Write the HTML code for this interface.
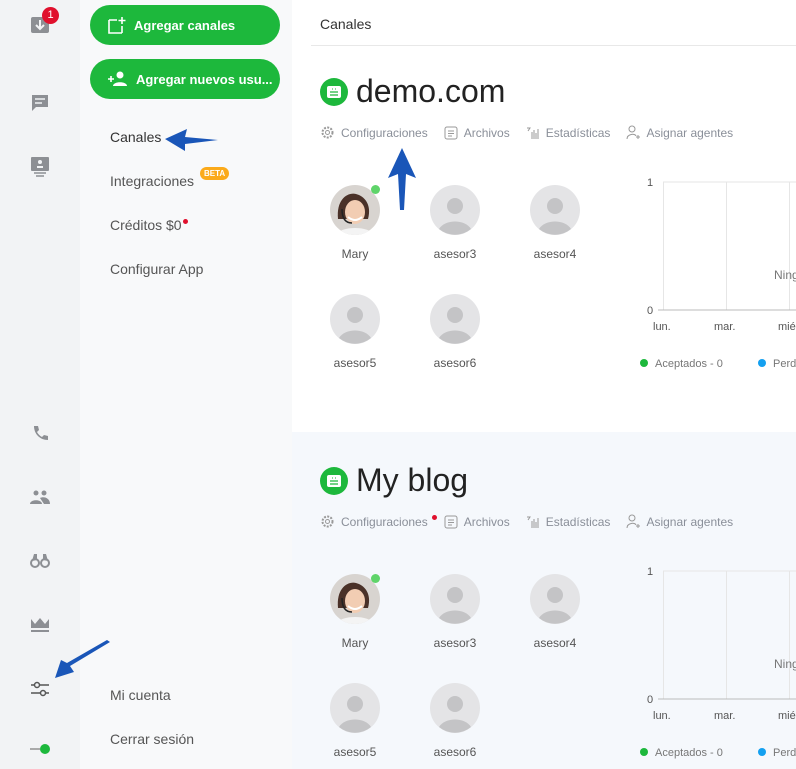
<!DOCTYPE html>
<html><head><meta charset="utf-8"><style>
*{margin:0;padding:0;box-sizing:border-box}
body{width:796px;height:769px;overflow:hidden;position:relative;font-family:"Liberation Sans",Arial,sans-serif;background:#fff;color:#333}
.a{position:absolute}
.rail{left:0;top:0;width:80px;height:769px;background:#f2f3f5}
.side{left:80px;top:0;width:212px;height:769px;background:#f8f9fa}
.btn{left:90px;width:190px;height:40px;border-radius:20px;background:#1db83c;color:#fff;font-size:13px;font-weight:bold;display:flex;align-items:center;padding-left:18px;gap:8px}
.nav{left:110px;font-size:14px;color:#555}
.sec2{left:292px;top:432px;width:504px;height:337px;background:#f5f8fc}
.title{font-size:32px;color:#222;display:flex;align-items:center;gap:8px}
.chip{width:28px;height:28px;border-radius:50%;background:#1db83c;display:flex;align-items:center;justify-content:center}
.tabs{font-size:12px;color:#8a8f99;display:flex;align-items:center}
.tabs span{display:flex;align-items:center;gap:6px;margin-right:16px}
.lbl{font-size:12px;color:#555;width:80px;text-align:center}
</style></head><body>
<div class="a rail"></div>
<div class="a side"></div>
<svg class="a" style="left:30px;top:15px" width="20" height="20"><rect x="1" y="2" width="18" height="16" rx="2" fill="#8d8f94"/><path d="M10 5v8M6 10l4 4 4-4" stroke="#f2f3f5" stroke-width="2" fill="none"/></svg>
<div class="a" style="left:42px;top:7px;width:17px;height:17px;border-radius:50%;background:#e0102d;color:#fff;font-size:11px;text-align:center;line-height:17px">1</div>
<svg class="a" style="left:31px;top:94px" width="18" height="20"><path d="M1 1h16v12H5l-4 4z" fill="#8d8f94"/><path d="M4 5h10M4 9h7" stroke="#f2f3f5" stroke-width="1.6"/></svg>
<svg class="a" style="left:30px;top:156px" width="20" height="22"><rect x="1" y="1" width="18" height="14" rx="1" fill="#8d8f94"/><circle cx="10" cy="6" r="2" fill="#f2f3f5"/><path d="M7 11h6" stroke="#f2f3f5" stroke-width="2"/><path d="M4 17h12M6 20h8" stroke="#8d8f94" stroke-width="1.5"/></svg>
<svg class="a" style="left:32px;top:425px" width="16" height="16"><path d="M2 1l4 0 1 4-2 2c1 2 3 4 5 5l2-2 4 1v4c-8 0-14-6-14-14z" fill="#8d8f94"/></svg>
<svg class="a" style="left:30px;top:490px" width="21" height="14"><circle cx="6" cy="3" r="2.5" fill="#8d8f94"/><circle cx="14" cy="3" r="2.5" fill="#8d8f94"/><path d="M0 14c0-5 12-5 12 0zM10 8c4-2 10 0 10 6h-6z" fill="#8d8f94"/></svg>
<svg class="a" style="left:30px;top:552px" width="20" height="16"><circle cx="5" cy="11" r="4" fill="none" stroke="#8d8f94" stroke-width="2"/><circle cx="15" cy="11" r="4" fill="none" stroke="#8d8f94" stroke-width="2"/><path d="M2 9l2-7h3v6M18 9l-2-7h-3v6" fill="#8d8f94"/></svg>
<svg class="a" style="left:30px;top:617px" width="20" height="16"><path d="M1 2l4 5 5-6 5 6 4-5v9H1z" fill="#8d8f94"/><path d="M1 14h18" stroke="#8d8f94" stroke-width="2"/></svg>
<svg class="a" style="left:30px;top:680px" width="20" height="18"><path d="M1 5h18M1 13h18" stroke="#555" stroke-width="1.5"/><circle cx="7" cy="5" r="2.5" fill="#f2f3f5" stroke="#555" stroke-width="1.5"/><circle cx="13" cy="13" r="2.5" fill="#f2f3f5" stroke="#555" stroke-width="1.5"/></svg>
<div class="a" style="left:30px;top:748px;width:10px;height:2px;background:#aaa"></div>
<div class="a" style="left:40px;top:744px;width:10px;height:10px;border-radius:50%;background:#1db83c"></div>
<svg class="a" style="left:52px;top:640px" width="62" height="40"><path d="M58 2L18 26l4 6L3 38l6-18 6 3L55 0z" fill="#1a56b8"/></svg>
<svg class="a" style="left:163px;top:127px" width="56" height="26"><path d="M55 13L22 10l2-8L2 12l20 12 0-7z" fill="#1a56b8"/></svg>
<svg class="a" style="left:386px;top:148px" width="32" height="64"><path d="M16 0L2 30l10-4 2 36h4l2-36 10 4z" fill="#1a56b8"/></svg>
<div class="a btn" style="top:5px"><svg width="18" height="18"><path d="M1 4v13h13" fill="none" stroke="#fff" stroke-width="1.6"/><path d="M1 4h8M14 10v7" stroke="#fff" stroke-width="1.6"/><path d="M14 1v7M10.5 4.5h7" stroke="#fff" stroke-width="1.6"/></svg>Agregar canales</div>
<div class="a btn" style="top:59px"><svg width="20" height="16"><path d="M0 8h6M3 5v6" stroke="#fff" stroke-width="1.6"/><circle cx="12" cy="4" r="3.5" fill="#fff"/><path d="M5 15c0-5 14-5 14 0z" fill="#fff"/></svg>Agregar nuevos usu...</div>
<div class="a nav" style="top:129px;color:#333">Canales</div>
<div class="a nav" style="top:173px">Integraciones</div>
<div class="a" style="left:200px;top:167px;background:#fbaa1a;color:#fff;font-size:8px;font-weight:bold;border-radius:7px;padding:2px 4px">BETA</div>
<div class="a nav" style="top:217px">Créditos $0</div>
<div class="a" style="left:183px;top:219px;width:5px;height:5px;border-radius:50%;background:#e0102d"></div>
<div class="a nav" style="top:261px">Configurar App</div>
<div class="a nav" style="top:687px">Mi cuenta</div>
<div class="a nav" style="top:731px">Cerrar sesión</div>
<div class="a" style="left:320px;top:16px;font-size:14px;color:#333">Canales</div>
<div class="a" style="left:311px;top:45px;width:485px;height:1px;background:#e8e8e8"></div>
<div class="a sec2"></div>

<div class="a title" style="left:320px;top:73px"><div class="chip"><svg width="14" height="12"><rect width="14" height="12" rx="2" fill="#fff"/><path d="M3 6h8M3 9h8" stroke="#1db83c" stroke-width="1.2"/><path d="M5 3h1M8 3h1" stroke="#1db83c"/></svg></div>demo.com</div>
<div class="a tabs" style="left:320px;top:125px">
<span><svg width="15" height="15"><circle cx="7.5" cy="7.5" r="5" fill="none" stroke="#999" stroke-dasharray="2 1.3" stroke-width="2"/><circle cx="7.5" cy="7.5" r="2" fill="none" stroke="#999"/></svg>Configuraciones</span>
<span><svg width="14" height="14"><rect x="1" y="1" width="12" height="12" rx="2" fill="none" stroke="#999"/><path d="M4 5h6M4 7.5h6M4 10h4" stroke="#999"/></svg>Archivos</span>
<span><svg width="14" height="14"><path d="M1 2h3l-2 3M6 13V6M8 13V4M10 13V7M12 13V3" stroke="#999" fill="none"/></svg>Estadísticas</span>
<span><svg width="14" height="15"><circle cx="6" cy="4" r="3" fill="none" stroke="#999"/><path d="M1 14c0-5 8-6 9-3M10 12h4M12 10v4" stroke="#999" fill="none"/></svg>Asignar agentes</span>
</div>
<div class="a title" style="left:320px;top:462px"><div class="chip"><svg width="14" height="12"><rect width="14" height="12" rx="2" fill="#fff"/><path d="M3 6h8M3 9h8" stroke="#1db83c" stroke-width="1.2"/><path d="M5 3h1M8 3h1" stroke="#1db83c"/></svg></div>My blog</div>
<div class="a tabs" style="left:320px;top:514px">
<span><svg width="15" height="15"><circle cx="7.5" cy="7.5" r="5" fill="none" stroke="#999" stroke-dasharray="2 1.3" stroke-width="2"/><circle cx="7.5" cy="7.5" r="2" fill="none" stroke="#999"/></svg>Configuraciones</span>
<span><svg width="14" height="14"><rect x="1" y="1" width="12" height="12" rx="2" fill="none" stroke="#999"/><path d="M4 5h6M4 7.5h6M4 10h4" stroke="#999"/></svg>Archivos</span>
<span><svg width="14" height="14"><path d="M1 2h3l-2 3M6 13V6M8 13V4M10 13V7M12 13V3" stroke="#999" fill="none"/></svg>Estadísticas</span>
<span><svg width="14" height="15"><circle cx="6" cy="4" r="3" fill="none" stroke="#999"/><path d="M1 14c0-5 8-6 9-3M10 12h4M12 10v4" stroke="#999" fill="none"/></svg>Asignar agentes</span>
</div>
<div class="a" style="left:432px;top:515px;width:5px;height:5px;border-radius:50%;background:#e0102d"></div>

<svg width="0" height="0" style="position:absolute"><defs><symbol id="p" viewBox="0 0 50 50"><circle cx="25" cy="25" r="25" fill="#e4e4e6"/><circle cx="25" cy="21" r="8" fill="#c4c4c6"/><path d="M9 44c6-10 26-10 32 0a25 25 0 0 1-32 0z" fill="#c4c4c6"/></symbol>
<symbol id="m" viewBox="0 0 50 50"><clipPath id="cc"><circle cx="25" cy="25" r="25"/></clipPath><g clip-path="url(#cc)"><rect width="50" height="50" fill="#d8d4d0"/><path d="M8 34c-2-20 10-27 18-25s16 10 12 25z" fill="#4a3128"/><ellipse cx="25" cy="27" rx="10" ry="12" fill="#f2cdb3"/><path d="M18 32q7 6 14 0" stroke="#fff" stroke-width="2" fill="none"/><path d="M4 52c4-12 38-12 42 0z" fill="#f4f4f4"/><path d="M12 24q0 14 10 14" stroke="#222" stroke-width="1.5" fill="none"/></g></symbol></defs></svg>
<svg class="a" style="left:330px;top:185px" width="50" height="50"><use href="#m"/></svg>
<div class="a" style="left:371px;top:185px;width:9px;height:9px;border-radius:50%;background:#5fd46a"></div>
<svg class="a" style="left:430px;top:185px" width="50" height="50"><use href="#p"/></svg>
<svg class="a" style="left:530px;top:185px" width="50" height="50"><use href="#p"/></svg>
<svg class="a" style="left:330px;top:294px" width="50" height="50"><use href="#p"/></svg>
<svg class="a" style="left:430px;top:294px" width="50" height="50"><use href="#p"/></svg>
<div class="a lbl" style="left:315px;top:247px">Mary</div>
<div class="a lbl" style="left:415px;top:247px">asesor3</div>
<div class="a lbl" style="left:515px;top:247px">asesor4</div>
<div class="a lbl" style="left:315px;top:356px">asesor5</div>
<div class="a lbl" style="left:415px;top:356px">asesor6</div>
<svg class="a" style="left:330px;top:574px" width="50" height="50"><use href="#m"/></svg>
<div class="a" style="left:371px;top:574px;width:9px;height:9px;border-radius:50%;background:#5fd46a"></div>
<svg class="a" style="left:430px;top:574px" width="50" height="50"><use href="#p"/></svg>
<svg class="a" style="left:530px;top:574px" width="50" height="50"><use href="#p"/></svg>
<svg class="a" style="left:330px;top:683px" width="50" height="50"><use href="#p"/></svg>
<svg class="a" style="left:430px;top:683px" width="50" height="50"><use href="#p"/></svg>
<div class="a lbl" style="left:315px;top:636px">Mary</div>
<div class="a lbl" style="left:415px;top:636px">asesor3</div>
<div class="a lbl" style="left:515px;top:636px">asesor4</div>
<div class="a lbl" style="left:315px;top:745px">asesor5</div>
<div class="a lbl" style="left:415px;top:745px">asesor6</div>

<svg class="a" style="left:630px;top:170px" width="166" height="210">
<g stroke="#e6e6e6"><path d="M33.5 12v128M96.5 12v128M159.5 12v128M33 12h133"/></g>
<path d="M28 140h138" stroke="#bbb"/>
<text x="17" y="16" font-size="11" fill="#555" font-family="Liberation Sans">1</text>
<text x="17" y="144" font-size="11" fill="#555" font-family="Liberation Sans">0</text>
<text x="23" y="160" font-size="11" fill="#555" font-family="Liberation Sans">lun.</text>
<text x="84" y="160" font-size="11" fill="#555" font-family="Liberation Sans">mar.</text>
<text x="148" y="160" font-size="11" fill="#555" font-family="Liberation Sans">mié</text>
<text x="144" y="109" font-size="12" fill="#777" font-family="Liberation Sans">Ning</text>
<circle cx="14" cy="193" r="4" fill="#1db83c"/><text x="25" y="197" font-size="11" fill="#777" font-family="Liberation Sans">Aceptados - 0</text>
<circle cx="132" cy="193" r="4" fill="#14a0f0"/><text x="143" y="197" font-size="11" fill="#777" font-family="Liberation Sans">Perd</text>
</svg>
<svg class="a" style="left:630px;top:559px" width="166" height="210">
<g stroke="#e6e6e6"><path d="M33.5 12v128M96.5 12v128M159.5 12v128M33 12h133"/></g>
<path d="M28 140h138" stroke="#bbb"/>
<text x="17" y="16" font-size="11" fill="#555" font-family="Liberation Sans">1</text>
<text x="17" y="144" font-size="11" fill="#555" font-family="Liberation Sans">0</text>
<text x="23" y="160" font-size="11" fill="#555" font-family="Liberation Sans">lun.</text>
<text x="84" y="160" font-size="11" fill="#555" font-family="Liberation Sans">mar.</text>
<text x="148" y="160" font-size="11" fill="#555" font-family="Liberation Sans">mié</text>
<text x="144" y="109" font-size="12" fill="#777" font-family="Liberation Sans">Ning</text>
<circle cx="14" cy="193" r="4" fill="#1db83c"/><text x="25" y="197" font-size="11" fill="#777" font-family="Liberation Sans">Aceptados - 0</text>
<circle cx="132" cy="193" r="4" fill="#14a0f0"/><text x="143" y="197" font-size="11" fill="#777" font-family="Liberation Sans">Perd</text>
</svg>
</body></html>
